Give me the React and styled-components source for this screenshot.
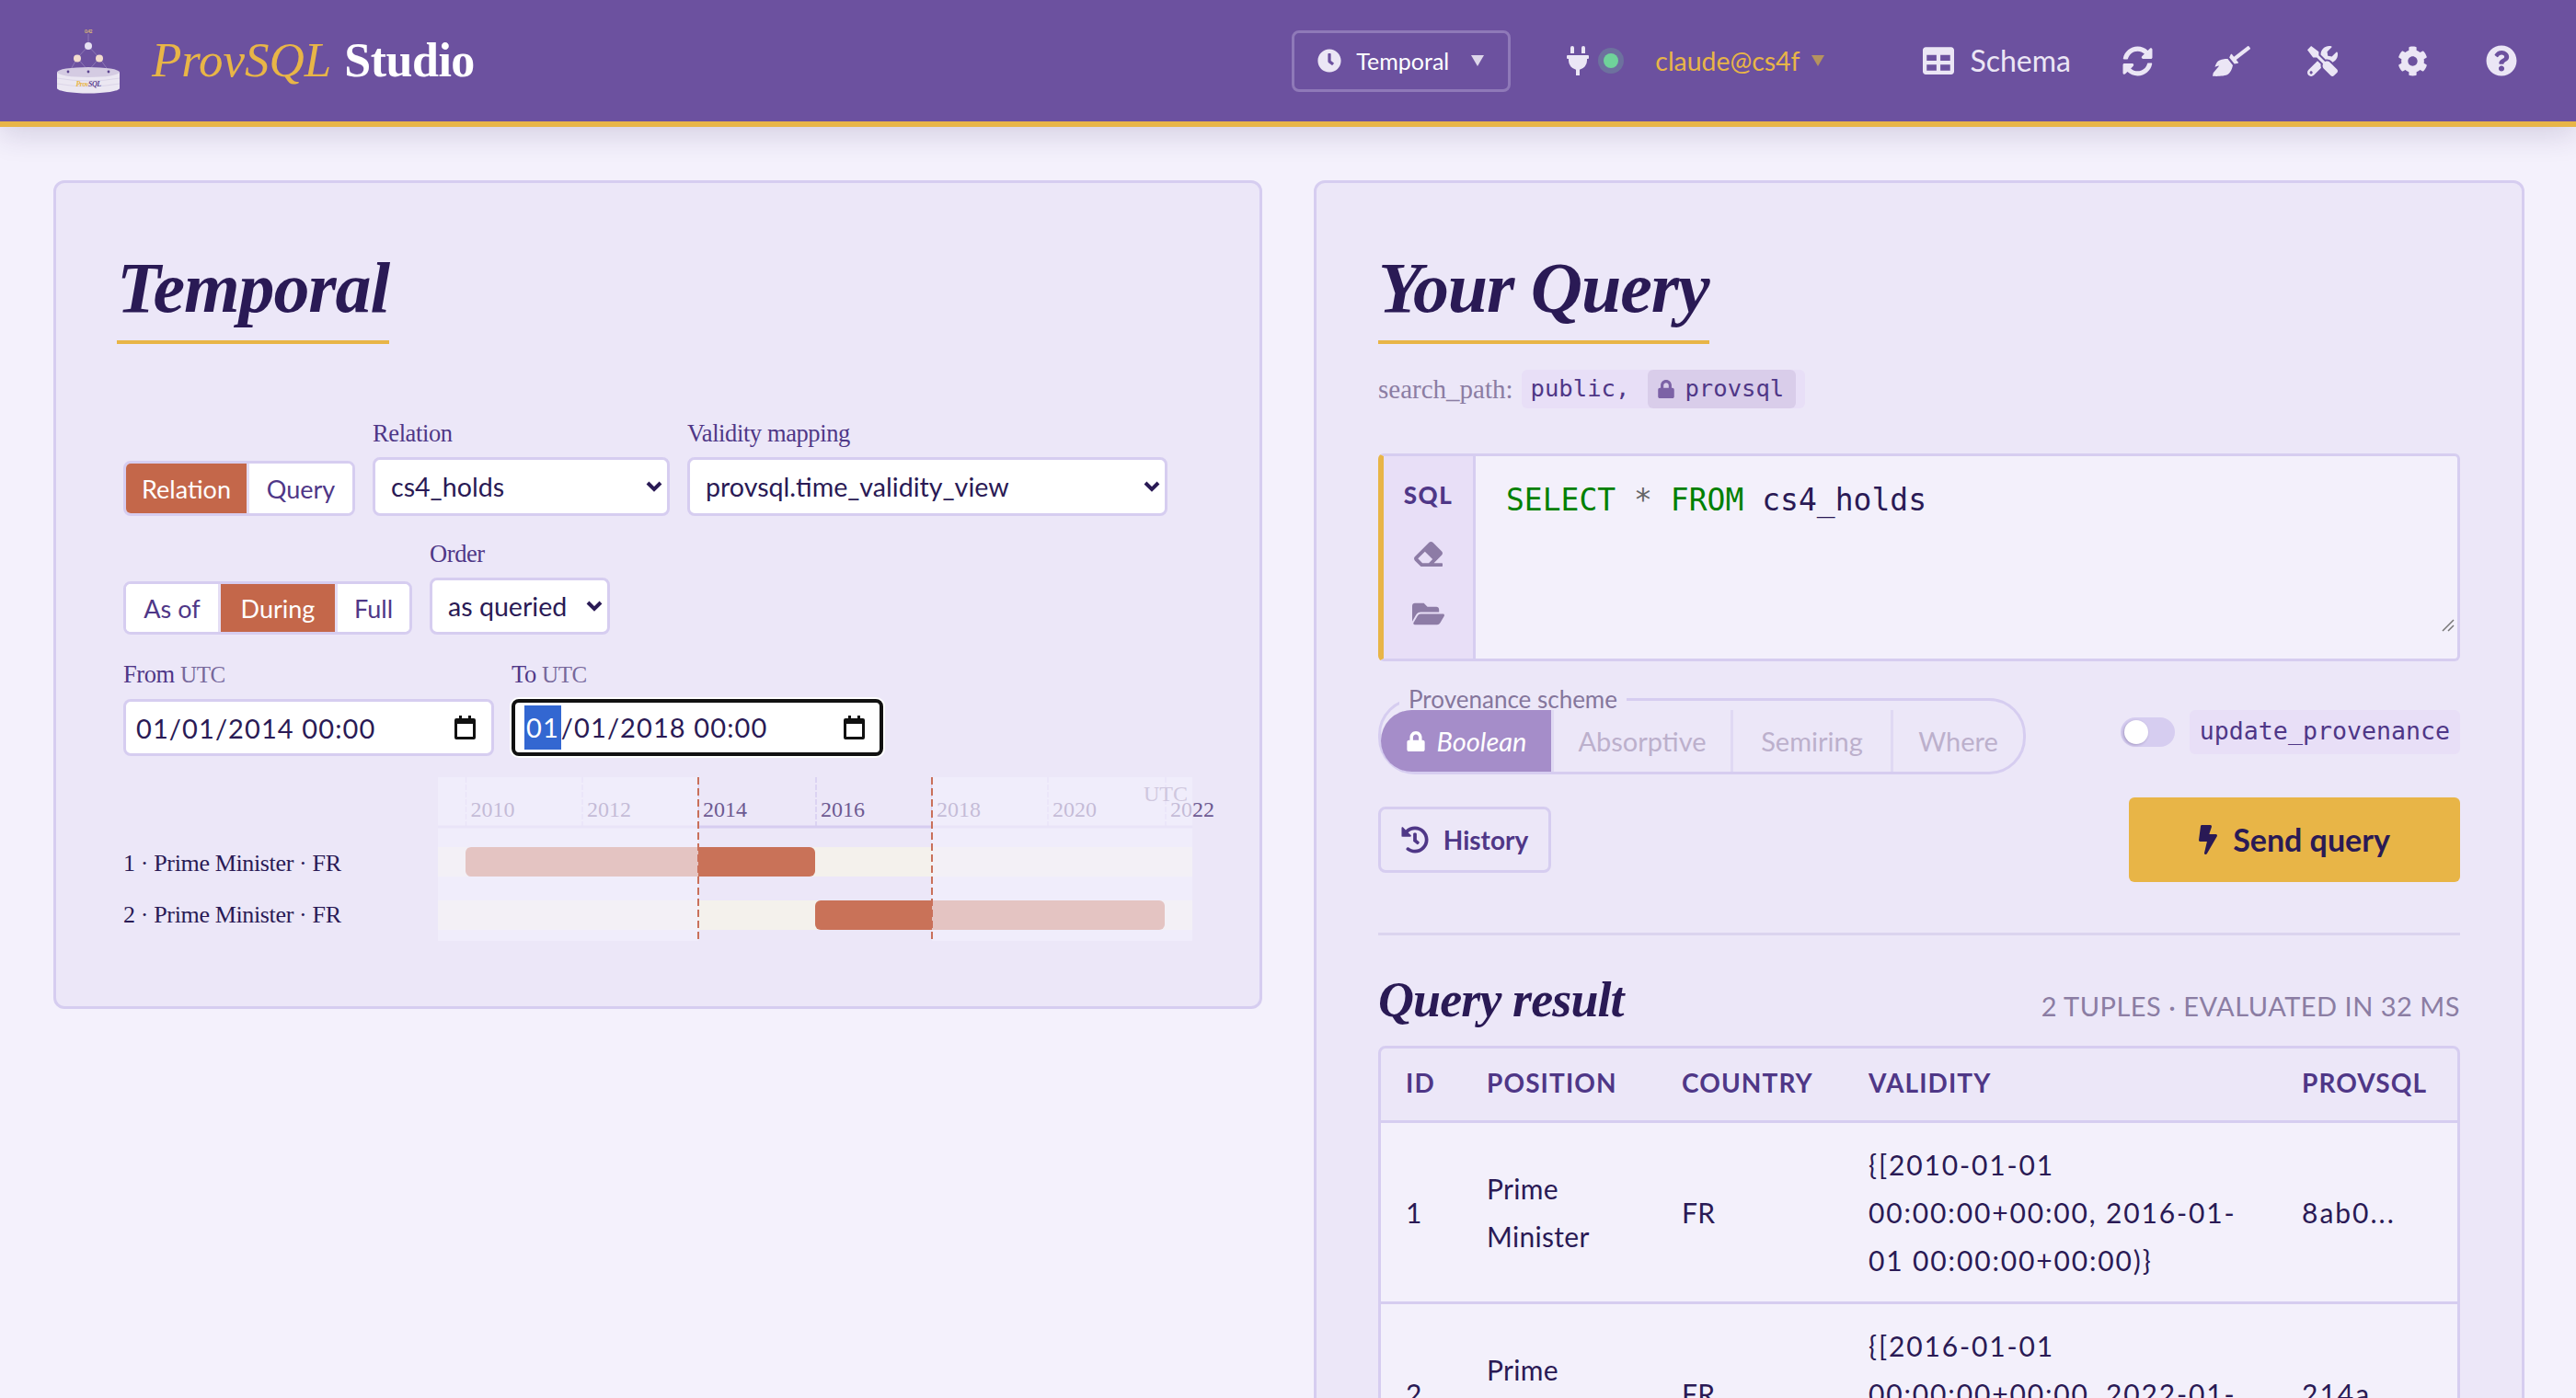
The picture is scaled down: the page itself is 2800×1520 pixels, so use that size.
import React from 'react';
import styled, { createGlobalStyle } from 'styled-components';
import { FaClock, FaPlug, FaTable, FaSyncAlt, FaBroom, FaTools, FaCog, FaQuestionCircle, FaEraser, FaFolderOpen, FaLock, FaHistory, FaBolt } from 'react-icons/fa';

const SERIF = '"Liberation Serif", serif';
const SANS = 'Lato, "Open Sans", sans-serif';
const MONO = '"DejaVu Sans Mono", monospace';
const BORDER = '#d6cdf0';
const INK = '#2a1a55';
const PURPLE = '#4f3787';

const Global = createGlobalStyle`
  html, body { margin: 0; height: 100%; overflow: hidden; background: #f4f1fc; }
  #root { height: 100vh; overflow: hidden; }
  * { box-sizing: border-box; }
`;

const Header = styled.header`
  height: 138px; background: #6c519f; border-bottom: 6px solid #e8b547;
  box-shadow: 0 8px 30px rgba(42,26,85,.16);
  display: flex; align-items: center; padding: 0 64px 0 60px; position: relative; color: #ebe6f5;
  font-family: ${SANS};
`;
const Brand = styled.div`
  display: flex; align-items: center; gap: 33px; margin-right: auto;
  font: 700 52px/1 ${SERIF}; color: #fff; letter-spacing: -.5px;
  em { font-size: 53px; color: #e8b547; font-weight: 400; margin-right: 14px; letter-spacing: 0; }
`;
const BrandText = styled.div`display: flex; align-items: baseline; margin-top: -2px;`;
const ModeButton = styled.button`
  width: 238px; height: 67px; border: 3px solid #8f79b8; border-radius: 8px; background: transparent;
  display: flex; align-items: center; padding: 0 25px; color: #fff; font: 400 25px/1 ${SANS};
  svg { margin-right: 16px; font-size: 26px; color: #ebe6f5; flex-shrink: 0; }
`;
const Caret = styled.span`
  width: 0; height: 0; border-left: 7px solid transparent; border-right: 7px solid transparent;
  border-top: 12px solid ${p => p.$color || '#ddd6ea'}; margin-left: ${p => p.$left || 24}px; flex-shrink: 0;
`;
const Plug = styled.div`margin-left: 57px; display: flex; align-items: center; font-size: 32px; color: #ebe6f5;`;
const Dot = styled.span`
  width: 16px; height: 16px; border-radius: 50%; background: #6fd39a; box-shadow: 0 0 0 6px rgba(111,211,154,.25); margin-left: 12px;
`;
const User = styled.div`
  margin-left: 40px; color: #e8b547; font: 400 28.4px/1 ${SANS}; display: flex; align-items: center;
`;
const SchemaLink = styled.div`
  margin-left: 107px; display: flex; align-items: center; gap: 17px; font: 400 32px/1 ${SANS};
  svg { font-size: 34px; flex-shrink: 0; }
`;
const NavIcon = styled.span`
  margin-left: ${p => p.$left}px; font-size: ${p => p.$size || 33}px; display: flex; color: #ebe6f5;
`;

const Main = styled.main`
  display: grid; grid-template-columns: 1314px 1316px; gap: 56px; padding: 58px 56px 0 58px; align-items: start;
`;
const Panel = styled.section`
  background: #ece7f8; border: 3px solid ${BORDER}; border-radius: 12px; padding: 67px ${p => p.$pad}px 0;
  min-height: ${p => p.$min || 0}px;
`;
const Title = styled.h2`
  display: inline-block; margin: 0; border-bottom: 4px solid #e8b547; padding: 0 0 10px;
  font: italic 700 78px/94px ${SERIF}; color: ${INK}; letter-spacing: -1.1px;
`;
const Controls = styled.div`padding-left: 7px; margin-top: 80px;`;
const Row = styled.div`display: flex; align-items: flex-end; gap: ${p => p.$gap || 20}px; margin-bottom: ${p => p.$mb || 0}px;`;
const Field = styled.div`display: flex; flex-direction: column; gap: 9px;`;
const Label = styled.span`
  font: 400 26.5px/34px ${SERIF}; color: ${PURPLE}; letter-spacing: -.4px;
  small { font-size: 25px; color: #77689b; }
`;
const Segmented = styled.div`
  display: flex; height: ${p => p.$h}px; border: 3px solid ${BORDER}; border-radius: 8px; overflow: hidden; background: #fff;
`;
const SegBtn = styled.button`
  border: 0; border-right: ${p => p.$last ? 0 : `3px solid #e4ddf4`}; padding: 0; width: ${p => p.$w}px;
  background: ${p => p.$on ? '#c4674a' : '#fff'}; color: ${p => p.$on ? '#fff' : PURPLE};
  font: 400 27px/1 ${SANS};
`;
const SelectWrap = styled.div`position: relative; width: ${p => p.$w}px; height: ${p => p.$h}px;`;
const Select = styled.select`
  appearance: none; display: block; width: 100%; height: 100%; border: 3px solid ${BORDER}; border-radius: 8px;
  background: #fff; color: ${INK}; font: 400 28.6px ${SANS}; padding: 0 0 0 17px;
`;
const Chevron = styled.svg`position: absolute; right: 8px; top: 50%; margin-top: -7px; pointer-events: none;`;
const DateBox = styled.div`
  width: ${p => p.$focus ? 404 : 403}px; height: 62px; display: flex; align-items: center; justify-content: space-between; background: #fff; border-radius: 8px;
  border: ${p => p.$focus ? '4px solid #111' : `3px solid ${BORDER}`};
  box-shadow: ${p => p.$focus ? '0 0 0 2px #fff' : 'none'};
  padding: 0 ${p => p.$focus ? 16 : 17}px 0 ${p => p.$focus ? 10 : 11}px; color: ${INK}; font: 400 29px/1 ${SANS}; letter-spacing: 1.1px;
`;
const DateSelected = styled.span`
  display: inline-block; background: #3367d1; color: #fff; padding: 9px 2px 10px; line-height: 29px;
`;
const Chart = styled.svg`display: block; margin-top: 23px; overflow: visible;`;

const SearchPath = styled.div`
  margin-top: 28px; display: flex; align-items: center; font: 400 29px/1 ${SERIF}; color: #8b7da3; gap: 9px;
`;
const CodePill = styled.span`
  display: inline-flex; align-items: center; height: ${p => p.$h || 42}px; padding: 0 ${p => p.$pad ?? 10}px; border-radius: 6px; background: #e8dff7;
  font: 400 ${p => p.$size || 25.6}px/1 ${MONO}; color: ${PURPLE};
`;
const LockedSchema = styled.span`
  display: inline-flex; align-items: center; gap: 10px; height: 42px; padding: 0 13px 0 10px; margin-left: 20px; border-radius: 6px; background: #d9cdea;
  svg { font-size: 20px; color: #7c62a6; }
`;
const Editor = styled.div`
  margin-top: 49px; height: 226px; display: flex; border: 3px solid ${BORDER}; border-left: 6px solid #e8b547; border-radius: 6px; overflow: hidden; background: #f3f0fb; position: relative;
`;
const EditorSide = styled.div`
  width: 100px; background: #e8dff7; border-right: 3px solid ${BORDER}; display: flex; flex-direction: column; align-items: center; padding-top: 29px; color: #8d7ca6;
`;
const SqlTag = styled.span`font: 900 26px/1 ${SANS}; color: ${PURPLE}; letter-spacing: 1.5px; margin-bottom: 36px;`;
const SideIcon = styled.span`display: flex; font-size: ${p => p.$size}px; margin-bottom: ${p => p.$mb}px;`;
const SqlText = styled.div`
  font: 400 33px/46px ${MONO}; padding: 25px 33px; color: ${INK};
  b { font-weight: 400; color: #008000; } i { font-style: normal; color: #666; }
`;
const Grip = styled.svg`position: absolute; right: 2px; bottom: 28px;`;
const SchemeRow = styled.div`display: flex; align-items: center; justify-content: space-between; margin-top: 30px;`;
const Scheme = styled.fieldset`
  margin: 0; padding: 0; width: 704px; height: 93px; border: 3px solid ${BORDER}; border-radius: 40px; display: flex; min-inline-size: 0;
  legend { margin-left: 20px; padding: 0 10px; font: 400 26px/23px ${SANS}; color: #85769c; }
`;
const SchemeOpt = styled.div`
  width: ${p => p.$w}px; height: 100%; display: flex; align-items: center; justify-content: center; gap: 12px;
  border-right: ${p => p.$last ? 0 : `3px solid #e0d9f3`};
  background: ${p => p.$on ? '#a58dc9' : 'transparent'}; color: ${p => p.$on ? '#fff' : '#bcb0cc'};
  border-radius: ${p => p.$on ? '34px 0 0 34px' : 0};
  font: ${p => p.$on ? 'italic' : 'normal'} 400 29px/1 ${SANS};
  svg { font-size: 22px; }
`;
const Switch = styled.div`display: flex; align-items: center; gap: 16px;`;
const Track = styled.span`
  width: 59px; height: 32px; border-radius: 16px; background: ${BORDER}; padding: 3px 0 0 4px; display: block;
`;
const Knob = styled.span`display: block; width: 26px; height: 26px; border-radius: 50%; background: #fff; box-shadow: -1px 1px 3px rgba(42,26,85,.3);`;
const Actions = styled.div`display: flex; align-items: center; justify-content: space-between; margin-top: 25px; padding-bottom: 55px; border-bottom: 3px solid #dbd4ef;`;
const HistoryBtn = styled.button`
  width: 188px; height: 72px; border: 3px solid ${BORDER}; border-radius: 8px; background: transparent; display: flex; align-items: center; justify-content: center; gap: 16px;
  color: ${PURPLE}; font: 700 28px/1 ${SANS};
  svg { font-size: 30px; }
`;
const SendBtn = styled.button`
  width: 360px; height: 92px; border: 0; border-radius: 6px; background: #e8b547; color: ${INK}; display: flex; align-items: center; justify-content: center; gap: 11px; padding: 0 6px 0 0;
  font: 700 34px/1 ${SANS};
  svg { font-size: 32px; }
`;
const ResultHead = styled.div`display: flex; align-items: baseline; justify-content: space-between; margin-top: 36px;`;
const ResultTitle = styled.h3`margin: 0; font: italic 700 54px/68px ${SERIF}; color: ${INK}; letter-spacing: -.9px;`;
const Meta = styled.span`font: 400 29px/1 ${SANS}; color: #8b7da3; letter-spacing: .5px;`;
const TableWrap = styled.div`margin-top: 16px; border: 3px solid ${BORDER}; border-radius: 8px 8px 0 0; overflow: hidden;`;
const Table = styled.table`
  width: 100%; border-collapse: collapse; table-layout: fixed; font: 400 30px/52px ${SANS}; color: ${INK};
  th { height: 79px; padding: 0 0 4px 27px; text-align: left; font: 700 28px/1 ${SANS}; color: ${PURPLE}; letter-spacing: 1.1px; border-bottom: 3px solid ${BORDER}; }
  td { padding: 19px 0 19px 27px; background: #f3f0fb; border-bottom: 3px solid ${BORDER}; vertical-align: middle; white-space: nowrap; letter-spacing: .3px; }
`;
const ValueCell = styled.td`&& { letter-spacing: ${p => p.$track}px; }`;

const rows = [
  { id: 1, v: ['{[2010-01-01', '00:00:00+00:00, 2016-01-', '01 00:00:00+00:00)}'], p: '8ab0...' },
  { id: 2, v: ['{[2016-01-01', '00:00:00+00:00, 2022-01-', '01 00:00:00+00:00)}'], p: '214a...' },
];
const ticks = [[372.5, 2010], [499, 2012], [625, 2014], [753, 2016], [879, 2018], [1005, 2020], [1133, 2022]];

function SelectBox({ w, h, value }) {
  return (
    <SelectWrap $w={w} $h={h}>
      <Select defaultValue={value}><option>{value}</option></Select>
      <Chevron width="18" height="14" viewBox="0 0 18 14"><path d="M2 3L9 10L16 3" fill="none" stroke={INK} strokeWidth="4" /></Chevron>
    </SelectWrap>
  );
}

function CalendarIcon() {
  return (
    <svg width="23" height="26" viewBox="0 0 23 26">
      <path d="M5 0h3v3h7V0h3v3h3a2 2 0 0 1 2 2v19a2 2 0 0 1-2 2H2a2 2 0 0 1-2-2V5a2 2 0 0 1 2-2h3zM3 9v14h17V9z" fill="#111" />
    </svg>
  );
}

function TimelineChart() {
  return (
    <Chart width="1186" height="178" viewBox="0 0 1186 178">
      <g fontFamily={SERIF}>
        <text x="0" y="102" fontSize="26" fill={INK} textLength="237">1 · Prime Minister · FR</text>
        <text x="0" y="158" fontSize="26" fill={INK} textLength="237">2 · Prime Minister · FR</text>
        <rect x="342" y="76" width="820" height="32" fill="#f4f1ec" />
        <rect x="342" y="134" width="820" height="32" fill="#f4f1ec" />
        <line x1="342" x2="1162" y1="54" y2="54" stroke={BORDER} strokeWidth="3" />
        {ticks.map(([x, y]) => (
          <g key={y}>
            <line x1={x} x2={x} y1="0" y2="54" stroke={BORDER} strokeWidth="1.5" strokeDasharray="6 2" />
            <text x={x + 5} y="43" fontSize="24" fill="#6d5a92">{y}</text>
          </g>
        ))}
        <text x="1157" y="26" fontSize="24" fill="#8d7ca6" textAnchor="end">UTC</text>
        <rect x="372" y="76" width="380" height="32" rx="6" fill="#c97258" />
        <rect x="752" y="134" width="380" height="32" rx="6" fill="#c97258" />
        <rect x="342" y="0" width="283" height="178" fill="#f3f0fc" opacity=".65" />
        <rect x="879" y="0" width="283" height="178" fill="#f3f0fc" opacity=".65" />
        <line x1="625" x2="625" y1="0" y2="178" stroke="#c9705a" strokeWidth="2" strokeDasharray="8 4" />
        <line x1="879" x2="879" y1="0" y2="178" stroke="#c9705a" strokeWidth="2" strokeDasharray="8 4" />
      </g>
    </Chart>
  );
}

function Logo() {
  return (
    <svg width="72" height="74" viewBox="60 28 72 74">
      <g stroke="#8d78b5" strokeWidth="1" fill="none">
        <path d="M96 36V49M96 49L84 62M96 49L108 62M84 62L76 76M84 62L96 76M108 62L96 76M108 62L118 76" />
      </g>
      <text x="96" y="35" fontSize="5" textAnchor="middle" fill="#d9b776" fontFamily={SANS}>0.42</text>
      <circle cx="96" cy="49" r="4" fill="#e6e0f2" />
      <circle cx="84" cy="62.5" r="4" fill="#f3dccd" />
      <circle cx="108" cy="62.5" r="4" fill="#f3dccd" />
      <path d="M62 77.5V95C62 98 79 100.5 96 100.5S130 98 130 95V77.5Z" fill="#ebe7f2" />
      <path d="M62 84Q96 90 130 84M62 90Q96 96 130 90" stroke="#dcd6e8" fill="none" />
      <ellipse cx="96" cy="77.5" rx="34" ry="5.5" fill="#d4cbe2" />
      <circle cx="74" cy="77" r="1.4" fill="#5c4490" />
      <circle cx="96" cy="77" r="1.4" fill="#5c4490" />
      <circle cx="118" cy="77" r="1.4" fill="#5c4490" />
      <text x="96" y="92.5" fontSize="8" textAnchor="middle" fontStyle="italic" fontFamily={SERIF} fill="#5c4490"><tspan fill="#e8b547">Prov</tspan>SQL</text>
    </svg>
  );
}

export default function App() {
  return (
    <>
      <Global />
      <Header>
        <Brand>
          <Logo />
          <BrandText><em>ProvSQL</em>Studio</BrandText>
        </Brand>
        <ModeButton><FaClock />Temporal<Caret /></ModeButton>
        <Plug><FaPlug /><Dot /></Plug>
        <User>claude@cs4f<Caret $color="#b5935f" $left={13} /></User>
        <SchemaLink><FaTable />Schema</SchemaLink>
        <NavIcon $left={56}><FaSyncAlt /></NavIcon>
        <NavIcon $left={65} $size={41}><FaBroom /></NavIcon>
        <NavIcon $left={62}><FaTools /></NavIcon>
        <NavIcon $left={65}><FaCog /></NavIcon>
        <NavIcon $left={63} $size={34}><FaQuestionCircle /></NavIcon>
      </Header>
      <Main>
        <Panel $min={901} $pad={66}>
          <Title>Temporal</Title>
          <Controls>
            <Row $mb={24} $gap={19}>
              <Segmented $h={60}>
                <SegBtn $on $w={134}>Relation</SegBtn>
                <SegBtn $last $w={112}>Query</SegBtn>
              </Segmented>
              <Field><Label>Relation</Label><SelectBox w={323} h={64} value="cs4_holds" /></Field>
              <Field><Label>Validity mapping</Label><SelectBox w={522} h={64} value="provsql.time_validity_view" /></Field>
            </Row>
            <Row $mb={26} $gap={19}>
              <Segmented $h={58}>
                <SegBtn $w={103}>As of</SegBtn>
                <SegBtn $on $w={127}>During</SegBtn>
                <SegBtn $last $w={78}>Full</SegBtn>
              </Segmented>
              <Field><Label>Order</Label><SelectBox w={196} h={62} value="as queried" /></Field>
            </Row>
            <Row $gap={19}>
              <Field><Label>From <small>UTC</small></Label>
                <DateBox><span>01/01/2014 00:00</span><CalendarIcon /></DateBox>
              </Field>
              <Field><Label>To <small>UTC</small></Label>
                <DateBox $focus><span><DateSelected>01</DateSelected>/01/2018 00:00</span><CalendarIcon /></DateBox>
              </Field>
            </Row>
            <TimelineChart />
          </Controls>
        </Panel>
        <Panel $min={1400} $pad={67}>
          <Title>Your Query</Title>
          <SearchPath>search_path:
            <CodePill $pad={10}>public,<LockedSchema><FaLock />provsql</LockedSchema></CodePill>
          </SearchPath>
          <Editor>
            <EditorSide>
              <SqlTag>SQL</SqlTag>
              <SideIcon $size={31} $mb={32}><FaEraser /></SideIcon>
              <SideIcon $size={35} $mb={0}><FaFolderOpen /></SideIcon>
            </EditorSide>
            <SqlText><b>SELECT</b> <i>*</i> <b>FROM</b> cs4_holds</SqlText>
            <Grip width="18" height="18" viewBox="0 0 18 18"><path d="M4 16L16 4M10 16L16 10" stroke="#777" strokeWidth="1.5" /></Grip>
          </Editor>
          <SchemeRow>
            <Scheme>
              <legend>Provenance scheme</legend>
              <SchemeOpt $on $w={188}><FaLock />Boolean</SchemeOpt>
              <SchemeOpt $w={195}>Absorptive</SchemeOpt>
              <SchemeOpt $w={174}>Semiring</SchemeOpt>
              <SchemeOpt $last $w={141}>Where</SchemeOpt>
            </Scheme>
            <Switch><Track><Knob /></Track><CodePill $h={48} $pad={11} $size={26.6}>update_provenance</CodePill></Switch>
          </SchemeRow>
          <Actions>
            <HistoryBtn><FaHistory />History</HistoryBtn>
            <SendBtn><FaBolt />Send query</SendBtn>
          </Actions>
          <ResultHead>
            <ResultTitle>Query result</ResultTitle>
            <Meta>2 TUPLES · EVALUATED IN 32 MS</Meta>
          </ResultHead>
          <TableWrap>
            <Table>
              <colgroup><col width="88" /><col width="212" /><col width="203" /><col width="471" /><col /></colgroup>
              <thead><tr><th>ID</th><th>POSITION</th><th>COUNTRY</th><th>VALIDITY</th><th>PROVSQL</th></tr></thead>
              <tbody>
                {rows.map(r => (
                  <tr key={r.id}>
                    <td>{r.id}</td>
                    <td>Prime<br />Minister</td>
                    <td>FR</td>
                    <ValueCell $track={1.85}>{r.v[0]}<br />{r.v[1]}<br />{r.v[2]}</ValueCell>
                    <ValueCell $track={2}>{r.p}</ValueCell>
                  </tr>
                ))}
              </tbody>
            </Table>
          </TableWrap>
        </Panel>
      </Main>
    </>
  );
}
